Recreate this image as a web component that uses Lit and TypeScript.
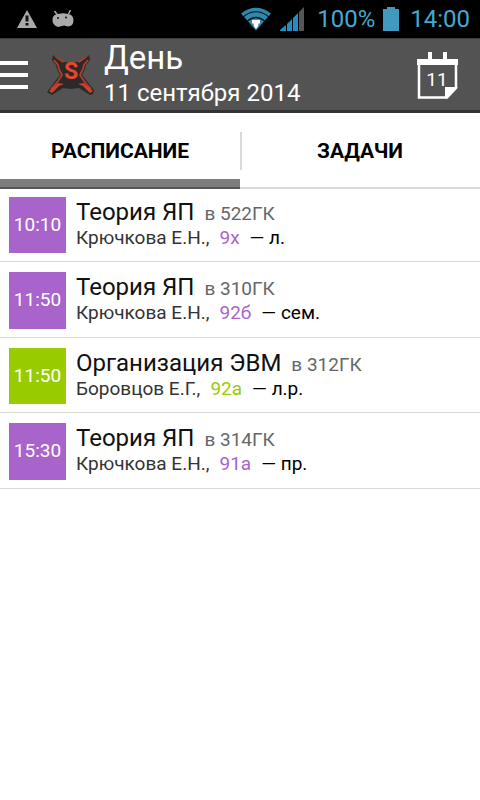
import { LitElement, html, css } from "lit";
import { customElement, property, state } from "lit/decorators.js";
import { classMap } from "lit/directives/class-map.js";

interface Lesson {
  time: string;
  subject: string;
  room: string;
  teacher: string;
  group: string;
  kind: string;
  tone: "purple" | "green";
}

const LESSONS: Lesson[] = [
  { time: "10:10", subject: "Теория ЯП", room: "в 522ГК", teacher: "Крючкова Е.Н.,", group: "9х", kind: "— л.", tone: "purple" },
  { time: "11:50", subject: "Теория ЯП", room: "в 310ГК", teacher: "Крючкова Е.Н.,", group: "92б", kind: "— сем.", tone: "purple" },
  { time: "11:50", subject: "Организация ЭВМ", room: "в 312ГК", teacher: "Боровцов Е.Г.,", group: "92а", kind: "— л.р.", tone: "green" },
  { time: "15:30", subject: "Теория ЯП", room: "в 314ГК", teacher: "Крючкова Е.Н.,", group: "91а", kind: "— пр.", tone: "purple" },
];

@customElement("status-bar")
export class StatusBar extends LitElement {
  static styles = css`
    :host {
      display: flex;
      align-items: center;
      height: 38px;
      padding: 0 10px 0 17px;
      background: #000;
      color: #45a9d0;
      font-size: 24px;
      line-height: 38px;
    }
    svg { display: block; flex: none; }
    .robot { margin-left: 14px; }
    .spacer { flex: 1; }
    .signal { margin-left: 8px; }
    .percent { margin-left: 13px; }
    .battery { margin: 0 11px 0 8px; }
  `;

  render() {
    return html`
      <svg class="warning" width="20" height="18" viewBox="0 0 20 18" aria-hidden="true">
        <path d="M10 0 20 18H0Z" fill="#aaa" />
        <path d="M8.500 5.500h3v6h-3zM8.500 13h3v2.500h-3z" fill="#111" />
      </svg>
      <svg class="robot" width="24" height="18" viewBox="0 0 24 18" aria-hidden="true">
        <path d="M3.500 1l3 4M19.500 0l-2 4" stroke="#aaa" stroke-width="1.500" />
        <path d="M7 4Q12 2.500 17 4Q22 4.500 22.500 10Q22.500 16 17 16.500L13 15.500L7 17Q1 15 1.500 9Q2 4.500 7 4Z" fill="#aaa" />
        <circle cx="7" cy="8" r="1" fill="#111" />
        <circle cx="15" cy="7.500" r="1" fill="#111" />
      </svg>
      <span class="spacer"></span>
      <svg class="wifi" width="32" height="24" viewBox="0 0 32 24" aria-hidden="true">
        <path d="M1 6.500Q16-5 31 6.500L16 23.500Z" fill="#2f88ad" />
        <g fill="none" stroke="#04161d" stroke-width="1.200">
          <path d="M3 10Q16-.500 29 10" />
          <path d="M7 14.500Q16 6.500 25 14.500" />
        </g>
        <path d="M12 13H20V16.500H18.500L18 19.500 16 22 14 19.500 13.500 16.500H12Z" fill="#fff" />
      </svg>
      <svg class="signal" width="24" height="24" viewBox="0 0 24 24" aria-hidden="true">
        <path d="M0 24V23L6 18V24ZM7 24V17L12 12V24ZM13 24V11L18 6V24Z" fill="#1f8fcb" />
        <path d="M19 24V5L24 0V24Z" fill="#555" />
      </svg>
      <span class="percent">100%</span>
      <svg class="battery" width="16" height="24" viewBox="0 0 16 24" aria-hidden="true">
        <path d="M0 2H4V0H12V2H16V24H0Z" fill="#4199bf" />
      </svg>
      <time>14:00</time>
    `;
  }
}

@customElement("action-bar")
export class ActionBar extends LitElement {
  @property() heading = "";
  @property() date = "";
  @property() day = "";

  static styles = css`
    :host {
      display: flex;
      align-items: center;
      box-sizing: border-box;
      height: 75px;
      background: #535353;
      border-top: 1px solid #3e3e3e;
      border-bottom: 3px solid #333;
      color: #fff;
    }
    button {
      display: block;
      flex: none;
      padding: 0;
      border: 0;
      background: none;
      color: inherit;
      font: inherit;
    }
    svg { display: block; }
    .logo { flex: none; margin-left: 19px; }
    .titles { flex: 1; margin-left: 9px; }
    h1, p { margin: 0; font-weight: 400; }
    h1 { font-size: 33px; line-height: 36px; }
    p { font-size: 24px; line-height: 34px; }
    .calendar { padding-top: 2px; margin-right: 22px; }
  `;

  render() {
    return html`
      <button class="menu" aria-label="Меню">
        <svg width="28" height="30" viewBox="0 0 28 30"><path d="M0 1h28v4H0zM0 13h28v4H0zM0 25h28v4H0z" fill="#fff" /></svg>
      </button>
      <svg class="logo" width="48" height="42" viewBox="0 0 48 42" aria-hidden="true">
        <path d="M6 1 17 8 24 9 31 8 42 1 43 6 39 11 38 15 35 21 39 26 47 36 46 40 43 41 32 34 24 35 16 34 5 41 0 38 9 26 13 21 10 15 9 11 5 6Z" fill="#2b292a" />
        <path d="M6 1 17 7 16 9 9 4ZM42 1 31 7 32 9 39 4Z" fill="#b33d28" />
        <g fill="none" stroke="#b33d28" stroke-width="1.800">
          <path d="M7 6 11 11 12 15 15 21 11 27 4 35" />
          <path d="M41 6 37 11 36 15 33 21 37 27 44 35" />
        </g>
        <path d="M2 37 11 29 17 30 12 32 5 39ZM46 37 37 29 31 30 36 32 43 39Z" fill="#c9432b" />
        <text x="24" y="25" text-anchor="middle" fill="#e5482b" font-size="23" font-weight="700">S</text>
      </svg>
      <div class="titles">
        <h1>${this.heading}</h1>
        <p>${this.date}</p>
      </div>
      <button class="calendar" aria-label="Выбрать дату">
        <svg width="41" height="48" viewBox="0 0 41 48">
          <path d="M11 0h4v8h-4zM26 0h4v8h-4zM0 7h41v6H0z" fill="#fff" />
          <path d="M2 12V45.500H30L39 36V12" fill="none" stroke="#fff" stroke-width="2.500" />
          <path d="M28 35H41L28 47Z" fill="#fff" />
          <text x="20" y="34" text-anchor="middle" fill="#fff" font-size="19">${this.day}</text>
        </svg>
      </button>
    `;
  }
}

@customElement("lesson-row")
export class LessonRow extends LitElement {
  @property({ attribute: false }) lesson!: Lesson;

  static styles = css`
    :host {
      display: flex;
      padding: 10px 9px 8px;
      border-bottom: 1px solid #d9d9d9;
    }
    .time {
      display: flex;
      flex: none;
      align-items: center;
      justify-content: center;
      box-sizing: border-box;
      width: 57px;
      padding-bottom: 2px;
      color: #fff;
      font-size: 19px;
    }
    .purple { --tone: #a964cb; }
    .green { --tone: #99cc00; }
    .time { background: var(--tone); }
    .info { margin-left: 10px; white-space: nowrap; }
    .line { display: flex; align-items: baseline; gap: 10px; }
    .top { line-height: 30px; }
    .bottom { font-size: 19px; line-height: 18px; }
    .subject { color: #111; font-size: 24px; }
    .room { color: #666; font-size: 19px; }
    .teacher { color: #333; }
    .group { color: var(--tone); }
    .kind { color: #000; }
  `;

  render() {
    const { time, subject, room, teacher, group, kind, tone } = this.lesson;
    return html`
      <time class="time ${tone}">${time}</time>
      <div class="info ${tone}">
        <div class="line top">
          <span class="subject">${subject}</span>
          <span class="room">${room}</span>
        </div>
        <div class="line bottom">
          <span class="teacher">${teacher}</span>
          <span class="group">${group}</span>
          <span class="kind">${kind}</span>
        </div>
      </div>
    `;
  }
}

@customElement("app-root")
export class AppRoot extends LitElement {
  @state() private tab = 0;

  static styles = css`
    :host {
      display: block;
      min-height: 100vh;
      background: #fff;
      font-family: Roboto, "Noto Sans", sans-serif;
    }
    .tabs {
      display: flex;
      height: 76px;
      background: linear-gradient(#d9d9d9, #d9d9d9) bottom / 100% 2px no-repeat;
    }
    .tab {
      flex: 1;
      box-sizing: border-box;
      padding: 10px 0 0;
      border: 0;
      border-bottom: 10px solid transparent;
      background: none;
      color: #000;
      font: 700 21px/56px Roboto, "Noto Sans", sans-serif;
    }
    .tab.active {
      border-bottom: 2px solid #555;
      box-shadow: inset 0 -8px #7d7d7d;
      padding-bottom: 8px;
    }
    .divider {
      width: 2px;
      height: 38px;
      margin: 19px -2px 0 0;
      background: #d9d9d9;
    }
    .list { margin: 0; padding: 0; list-style: none; }
    lesson-row { min-height: 56px; }
    li:first-child lesson-row { padding-top: 8px; }
    li:nth-child(even) lesson-row { min-height: 57px; }
  `;

  private renderTab(index: number, label: string) {
    return html`<button
      class=${classMap({ tab: true, active: this.tab === index })}
      role="tab"
      aria-selected=${this.tab === index ? "true" : "false"}
      @click=${() => (this.tab = index)}
    >${label}</button>`;
  }

  render() {
    return html`
      <status-bar></status-bar>
      <action-bar heading="День" date="11 сентября 2014" day="11"></action-bar>
      <nav class="tabs" role="tablist">
        ${this.renderTab(0, "РАСПИСАНИЕ")}
        <span class="divider"></span>
        ${this.renderTab(1, "ЗАДАЧИ")}
      </nav>
      ${this.tab === 0
        ? html`<ul class="list">
            ${LESSONS.map((lesson) => html`<li><lesson-row .lesson=${lesson}></lesson-row></li>`)}
          </ul>`
        : null}
    `;
  }
}
